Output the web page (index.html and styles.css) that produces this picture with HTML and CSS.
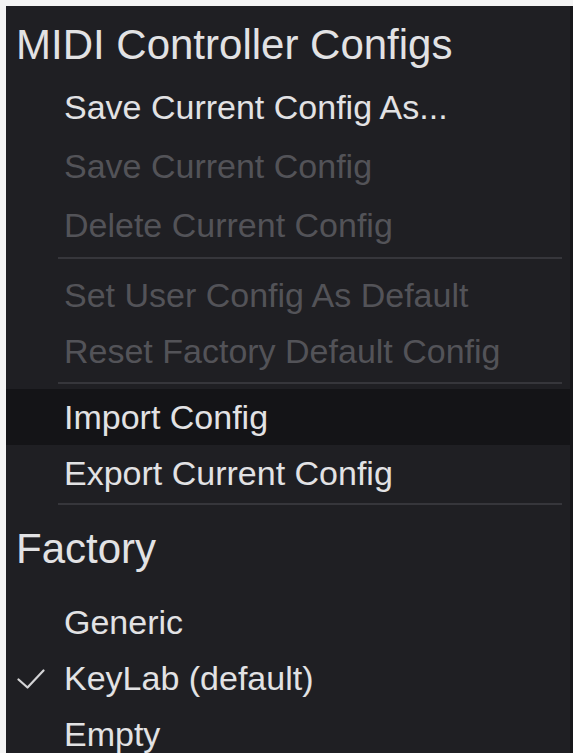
FILE: index.html
```html
<!DOCTYPE html>
<html>
<head>
<meta charset="utf-8">
<link rel="stylesheet" href="styles.css">
</head>
<body>
<div class="panel">
  <div class="title">MIDI Controller Configs</div>
  <div class="group g1">
    <div class="item">Save Current Config As...</div>
    <div class="item disabled">Save Current Config</div>
    <div class="item disabled">Delete Current Config</div>
  </div>
  <div class="sep"></div>
  <div class="group g2">
    <div class="item disabled">Set User Config As Default</div>
    <div class="item disabled">Reset Factory Default Config</div>
  </div>
  <div class="sep"></div>
  <div class="group g3">
    <div class="item active">Import Config</div>
    <div class="item">Export Current Config</div>
  </div>
  <div class="sep"></div>
  <div class="title factory">Factory</div>
  <div class="group g4">
    <div class="item">Generic</div>
    <div class="item checked">
      <svg class="check" width="28" height="20" viewBox="0 0 28 20"><path d="M1.5 10.5 L10.5 18.5 L26.5 1.5" fill="none" stroke="#d4d4d6" stroke-width="2.2" stroke-linecap="round" stroke-linejoin="round"/></svg>
      KeyLab (default)
    </div>
    <div class="item">Empty</div>
  </div>
</div>
</body>
</html>
```
FILE: styles.css
```css
html, body {
  margin: 0;
  padding: 0;
  background: #f4f4f4;
  height: 100%;
  overflow: hidden;
}
.panel {
  margin: 6px 0 0 6px;
  height: 760px;
  background: #1f1f23;
  border-right: 3px solid #17171a;
  font-family: "Liberation Sans", Arial, sans-serif;
  color: #e2e2e4;
  display: flex;
  flex-direction: column;
}
.title {
  font-size: 42px;
  line-height: 62px;
  height: 62px;
  padding-left: 10px;
  margin-top: 8px;
}
.factory {
  margin-top: 10px;
  height: 76px;
  line-height: 62px;
}
.item {
  position: relative;
  font-size: 34px;
  padding-left: 58px;
}
.g1 {
  margin-top: 2px;
}
.g1 .item {
  height: 59px;
  line-height: 59px;
}
.g2 .item {
  height: 56px;
  line-height: 56px;
}
.g4 .item {
  height: 56px;
  line-height: 56px;
}
.g3 {
  margin-top: 2px;
}
.g3 .item {
  height: 56px;
  line-height: 56px;
}
.item.disabled {
  color: #535358;
}
.item.active {
  background: #141417;
}
.check {
  position: absolute;
  left: 11px;
  top: 19px;
}
.sep {
  height: 2px;
  background: #36363b;
  margin: 2px 8px 8px 52px;
}
.g2 + .sep {
  margin: 3px 8px 3px 52px;
}
.g3 + .sep {
  margin: 2px 8px 3px 52px;
}
```
